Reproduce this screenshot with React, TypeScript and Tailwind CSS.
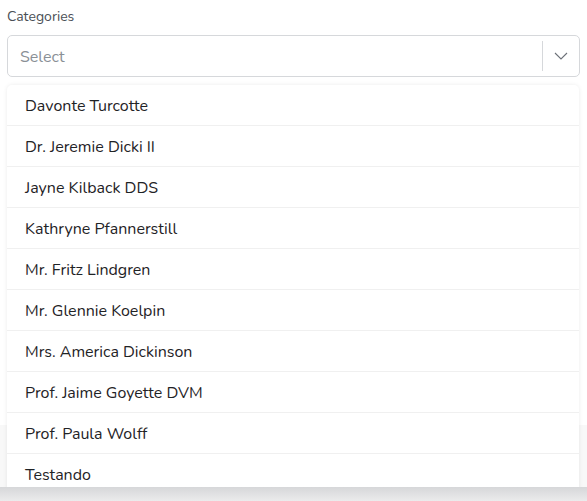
import React from "react";

const options = [
  "Davonte Turcotte",
  "Dr. Jeremie Dicki II",
  "Jayne Kilback DDS",
  "Kathryne Pfannerstill",
  "Mr. Fritz Lindgren",
  "Mr. Glennie Koelpin",
  "Mrs. America Dickinson",
  "Prof. Jaime Goyette DVM",
  "Prof. Paula Wolff",
  "Testando",
];

export default function App() {
  return (
    <div className="relative h-[501px] w-[587px] overflow-hidden bg-white font-['Nunito','Noto_Sans',sans-serif]">
      <div className="h-[425px] bg-white px-[7px] pt-[8px]">
        <label className="block text-[14px] leading-[18px] text-[#4a4f55]">Categories</label>
        <div className="mt-[9px] flex h-[42px] items-center rounded-[5px] border border-[#d6d8db] bg-white">
          <span className="flex-1 pl-[12px] pt-[2px] text-[16px] text-[#8a9096]">Select</span>
          <span className="h-[30px] w-px bg-[#d6d8db]" />
          <span className="flex w-[36px] items-center justify-center text-[#6c7178]">
            <svg width="14" height="8" viewBox="0 0 14 8" fill="none">
              <path d="M1 1l6 6 6-6" stroke="currentColor" strokeWidth="1.1" />
            </svg>
          </span>
        </div>
      </div>
      <div className="h-[76px] bg-[#f8f8f8]" />

      {/* dropdown menu */}
      <ul className="absolute left-[7px] top-[85px] w-[572px] rounded-[5px] bg-white shadow-[0_0_4px_rgba(0,0,0,0.08)]">
        {options.map((o, i) => (
          <li
            key={o}
            className={`flex items-center px-[18px] pt-[2px] text-[16px] text-[#1f2326] ${
              i === 0 ? "h-[40px]" : "h-[41px] border-t border-[#f0f0f0]"
            }`}
          >
            {o}
          </li>
        ))}
      </ul>

      {/* bottom bar shadow over the page */}
      <div className="absolute bottom-0 left-0 z-10 h-[14px] w-full bg-gradient-to-b from-[#d6d7d9] to-[#ebebec]" />
    </div>
  );
}
